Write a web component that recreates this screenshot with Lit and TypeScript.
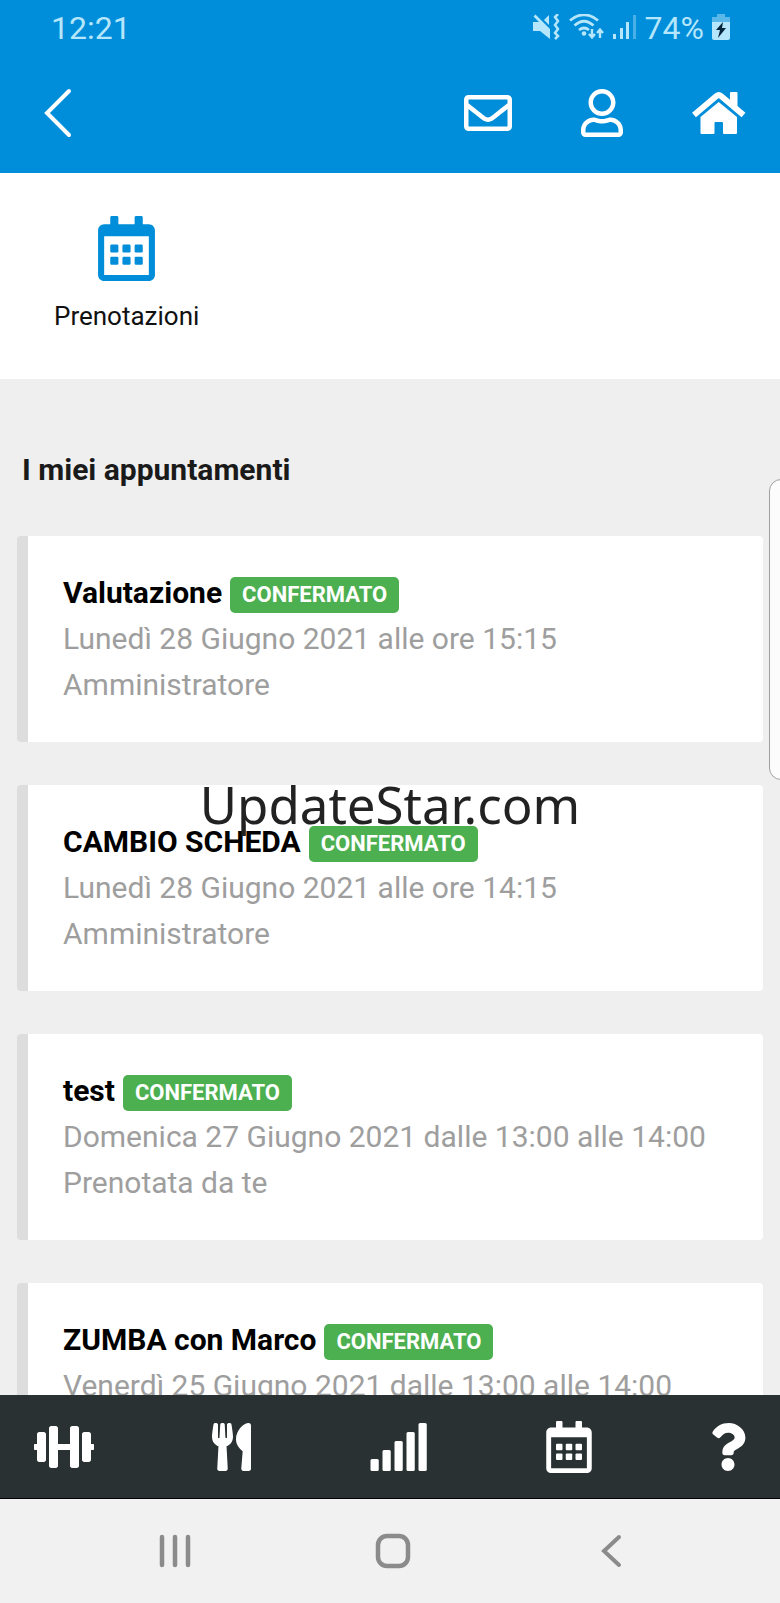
import { LitElement, html, svg, css } from "lit";
import { customElement, property } from "lit/decorators.js";

const calendarShape = svg`
  <path fill-rule="evenodd" d="M96 64V12c0-7 5-12 12-12h40c7 0 12 5 12 12v52h128V12c0-7 5-12 12-12h40c7 0 12 5 12 12v52h48c26 0 48 22 48 48v352c0 26-22 48-48 48H48c-26 0-48-22-48-48V112c0-26 22-48 48-48zM48 160v304h352V160z"/>
  <rect x="96" y="224" width="64" height="64" rx="10"/><rect x="192" y="224" width="64" height="64" rx="10"/><rect x="288" y="224" width="64" height="64" rx="10"/>
  <rect x="96" y="320" width="64" height="64" rx="10"/><rect x="192" y="320" width="64" height="64" rx="10"/><rect x="288" y="320" width="64" height="64" rx="10"/>`;

const icons = {
  back: html`<svg class="icon" width="30" height="50" viewBox="0 0 30 50"><path d="M26 3 4 25 26 47" fill="none" stroke="currentColor" stroke-width="4" stroke-linecap="round" stroke-linejoin="miter"/></svg>`,
  mail: html`<svg class="icon" width="48" height="48" viewBox="0 0 512 512"><path d="M464 64H48C21.49 64 0 85.49 0 112v288c0 26.51 21.49 48 48 48h416c26.51 0 48-21.49 48-48V112c0-26.51-21.49-48-48-48zm0 48v40.805c-22.422 18.259-58.168 46.651-134.587 106.49-16.841 13.247-50.201 45.072-73.413 44.701-23.208.375-56.579-31.459-73.413-44.701C106.18 199.465 70.425 171.067 48 152.805V112h416zM48 400V214.398c22.914 18.251 55.409 43.862 104.938 82.646 21.857 17.205 60.134 55.186 103.062 54.955 42.717.231 80.509-37.199 103.053-54.947 49.528-38.783 82.032-64.401 104.947-82.653V400H48z"/></svg>`,
  user: html`<svg class="icon" width="42" height="48" viewBox="0 0 448 512"><path d="M313.6 304c-28.7 0-42.5 16-89.6 16-47.1 0-60.8-16-89.6-16C60.2 304 0 364.2 0 438.4V464c0 26.5 21.5 48 48 48h352c26.5 0 48-21.5 48-48v-25.6c0-74.2-60.2-134.4-134.4-134.4zM400 464H48v-25.6c0-47.6 38.8-86.4 86.4-86.4 14.6 0 38.3 16 89.6 16 51.7 0 74.9-16 89.6-16 47.6 0 86.4 38.8 86.4 86.4V464zM224 288c79.5 0 144-64.5 144-144S303.5 0 224 0 80 64.5 80 144s64.5 144 144 144zm0-240c52.9 0 96 43.1 96 96s-43.1 96-96 96-96-43.1-96-96 43.1-96 96-96z"/></svg>`,
  home: html`<svg class="icon" width="54" height="48" viewBox="0 0 54 48"><path d="M8.5 28 26.7 13 45 28V44q0 1-1 1H32q-1 0-1-1V34q0-1-1-1H23.500q-1 0-1 1V44q0 1-1 1H9.500q-1 0-1-1z"/><path d="M38 4q0-1 1-1H44.500q1 0 1 1V20L38 13z"/><path d="M2 26 24.500 7Q26.700 5.200 29 7L51.500 26" fill="none" stroke="currentColor" stroke-width="6"/></svg>`,
  calendarLarge: html`<svg class="icon" width="57" height="65" viewBox="0 0 448 512">${calendarShape}</svg>`,
  calendar: html`<svg class="icon" width="46" height="52" viewBox="0 0 448 512">${calendarShape}</svg>`,
  dumbbell: html`<svg class="icon" width="60" height="48" viewBox="0 0 640 512"><path d="M104 96H56c-13.300 0-24 10.700-24 24v104H8c-4.400 0-8 3.600-8 8v48c0 4.400 3.600 8 8 8h24v104c0 13.300 10.700 24 24 24h48c13.300 0 24-10.700 24-24V120c0-13.300-10.700-24-24-24zm528 128h-24V120c0-13.300-10.700-24-24-24h-48c-13.300 0-24 10.700-24 24v272c0 13.300 10.700 24 24 24h48c13.300 0 24-10.700 24-24V288h24c4.400 0 8-3.600 8-8v-48c0-4.400-3.600-8-8-8zM456 32h-48c-13.300 0-24 10.700-24 24v168H256V56c0-13.300-10.700-24-24-24h-48c-13.300 0-24 10.700-24 24v400c0 13.300 10.700 24 24 24h48c13.300 0 24-10.700 24-24V288h128v168c0 13.300 10.700 24 24 24h48c13.300 0 24-10.700 24-24V56c0-13.300-10.700-24-24-24z"/></svg>`,
  utensils: html`<svg class="icon" width="39" height="48" viewBox="0 0 416 512"><path d="M207.900 15.200c.8 4.700 16.100 94.500 16.100 128.800 0 52.300-27.800 89.600-68.900 104.600L168 486.700c.7 13.700-10.200 25.300-24 25.300H80c-13.700 0-24.700-11.500-24-25.300l12.900-238.100C27.700 233.600 0 196.200 0 144 0 109.600 15.300 19.900 16.100 15.200 19.300-5.100 61.400-5.400 64 16.300v141.200c1.300 3.400 15.100 3.200 16 0 1.400-25.300 7.900-139.200 8-141.800 3.300-20.800 44.700-20.800 47.900 0 .2 2.700 6.600 116.500 8 141.800.9 3.200 14.800 3.400 16 0V16.300c2.600-21.600 44.800-21.400 47.900-1.100zm119.200 285.700l-15 185.100c-1.200 14 9.900 26 23.900 26h56c13.300 0 24-10.700 24-24V24c0-13.200-10.700-24-24-24-82.500 0-221.400 178.500-64.900 300.900z"/></svg>`,
  signal: html`<svg class="icon" width="60" height="48" viewBox="0 0 640 512"><rect x="16" y="384" width="88" height="128" rx="16"/><rect x="144" y="288" width="88" height="224" rx="16"/><rect x="272" y="192" width="88" height="320" rx="16"/><rect x="400" y="96" width="88" height="416" rx="16"/><rect x="528" y="0" width="88" height="512" rx="16"/></svg>`,
  question: html`<svg class="icon" width="36" height="48" viewBox="0 0 384 512"><path d="M202.021 0C122.202 0 70.503 32.703 29.914 91.026c-7.363 10.580-5.093 25.086 5.178 32.874l43.138 32.709c10.373 7.865 25.132 6.026 33.253-4.148 25.049-31.381 43.630-49.449 82.757-49.449 30.764 0 68.816 19.799 68.816 49.631 0 22.552-18.617 34.134-48.993 51.164-35.423 19.860-82.299 44.576-82.299 106.405V320c0 13.255 10.745 24 24 24h72.471c13.255 0 24-10.745 24-24v-5.773c0-42.860 125.268-44.645 125.268-160.627C377.504 66.256 286.902 0 202.021 0zM192 373.459c-38.196 0-69.271 31.075-69.271 69.271 0 38.195 31.075 69.270 69.271 69.270s69.271-31.075 69.271-69.271-31.075-69.270-69.271-69.270z"/></svg>`,
  muted: html`<svg class="icon" width="28" height="28" viewBox="0 0 28 28"><path d="M.5 2.500 2.500.5 17 15V25L7 17H0V8H6z"/><path d="M11 6 16 1V11z"/><path d="M25 0l-3 3 3 4-3 4 3 4-3 4 3 3-3 3" fill="none" stroke="currentColor" stroke-width="2.500"/></svg>`,
  wifi: html`<svg class="icon" width="36" height="28" viewBox="0 0 36 28"><path d="M1 6.500Q15-5 29 6.500M5.500 11.500Q15 3 24.500 11.500M10 16Q15 12 20 16" fill="none" stroke="currentColor" stroke-width="2.800"/><circle cx="15" cy="19.500" r="2.300"/><path d="M23 15v8M20 20l3 3.500 3-3.500M31 24v-8M28 19l3-3.500 3 3.500" fill="none" stroke="currentColor" stroke-width="2.400"/></svg>`,
  mobile: html`<svg class="icon" width="24" height="28" viewBox="0 0 24 28"><rect x="0" y="20" width="3" height="5"/><rect x="7" y="14" width="3" height="11"/><rect x="13" y="8" width="3" height="17"/><rect x="20" y="1" width="3" height="24" opacity="0.400"/></svg>`,
  battery: html`<svg class="icon" width="18" height="28" viewBox="0 0 18 28"><path opacity="0.500" d="M5 0h8v3h5v5H0V3h5z"/><path d="M0 8h18v16q0 2-2 2H2q-2 0-2-2z"/><path fill="#06243a" d="M11 8 4 16h4l-2 8 8-10h-4z"/></svg>`,
  recents: html`<svg class="icon" width="36" height="36" viewBox="0 0 36 36"><path d="M5 4V32M18 4V32M31 4V32" stroke="currentColor" stroke-width="4.500" stroke-linecap="round"/></svg>`,
  square: html`<svg class="icon" width="36" height="36" viewBox="0 0 36 36"><rect x="3" y="3" width="30" height="30" rx="9" fill="none" stroke="currentColor" stroke-width="4.500"/></svg>`,
  sysBack: html`<svg class="icon" width="36" height="36" viewBox="0 0 36 36"><path d="M26 4 11 18 26 32" fill="none" stroke="currentColor" stroke-width="4" stroke-linecap="round"/></svg>`,
};

interface Appointment {
  title: string;
  when: string;
  who: string;
}

const appointments: Appointment[] = [
  { title: "Valutazione", when: "Lunedì 28 Giugno 2021 alle ore 15:15", who: "Amministratore" },
  { title: "CAMBIO SCHEDA", when: "Lunedì 28 Giugno 2021 alle ore 14:15", who: "Amministratore" },
  { title: "test", when: "Domenica 27 Giugno 2021 dalle 13:00 alle 14:00", who: "Prenotata da te" },
  { title: "ZUMBA con Marco", when: "Venerdì 25 Giugno 2021 dalle 13:00 alle 14:00", who: "Prenotata da te" },
];

@customElement("appointment-card")
export class AppointmentCard extends LitElement {
  @property({ attribute: false }) item!: Appointment;

  static styles = css`
    :host {
      display: block;
      flex: none;
    }
    .card {
      padding: 34px 35px;
      border-left: 11px solid #dddddd;
      border-radius: 4px;
      background: #fff;
      color: #9e9e9e;
      font-size: 30px;
      line-height: 46px;
    }
    .row {
      display: flex;
      align-items: center;
      gap: 8px;
      height: 46px;
    }
    .title {
      margin: 0;
      color: #000;
      font-size: 30px;
      font-weight: 700;
    }
    .badge {
      padding: 0 12px;
      border-radius: 5px;
      background: #4caf50;
      color: #fff;
      font-size: 22px;
      font-weight: 700;
      line-height: 36px;
      margin-top: 4px;
    }
    .line {
      margin: 0;
    }
  `;

  render() {
    return html`
      <article class="card">
        <div class="row">
          <h3 class="title">${this.item.title}</h3>
          <span class="badge">CONFERMATO</span>
        </div>
        <p class="line">${this.item.when}</p>
        <p class="line">${this.item.who}</p>
      </article>
    `;
  }
}

@customElement("app-root")
export class AppRoot extends LitElement {
  static styles = css`
    :host {
      display: flex;
      flex-direction: column;
      height: 100vh;
      position: relative;
      overflow: hidden;
      background: #efefef;
      font-family: Roboto, "Liberation Sans", sans-serif;
    }
    .icon {
      display: block;
      fill: currentColor;
    }
    button,
    .link {
      display: block;
      margin: 0;
      padding: 0;
      border: 0;
      background: none;
      color: inherit;
      font: inherit;
      text-decoration: none;
      cursor: pointer;
    }
    .header {
      flex: none;
      background: #008dd9;
      color: #fff;
    }
    .status {
      display: flex;
      align-items: center;
      justify-content: space-between;
      height: 56px;
      padding: 0 50px 0 51px;
      color: #b5e6fb;
      font-size: 32px;
    }
    .indicators {
      display: flex;
      align-items: center;
      gap: 8px;
    }
    .toolbar {
      display: flex;
      align-items: center;
      justify-content: space-between;
      height: 113px;
      padding: 0 34px 4px 43px;
    }
    .actions {
      display: flex;
      align-items: center;
      gap: 69px;
    }
    .shortcuts {
      flex: none;
      display: flex;
      padding: 43px 54px 48px;
      background: #fff;
    }
    .shortcut {
      display: flex;
      flex-direction: column;
      align-items: center;
      gap: 20px;
      color: #008dd9;
    }
    .caption {
      color: #111;
      font-size: 26px;
      line-height: 30px;
    }
    .content {
      flex: 1;
      min-height: 0;
      display: flex;
      flex-direction: column;
      gap: 43px;
      padding: 69px 17px 0;
      overflow: hidden;
    }
    .heading {
      margin: 0;
      padding: 0 5px 2px;
      color: #1a1a1a;
      font-size: 30px;
      font-weight: 700;
      line-height: 43px;
    }
    .tabs {
      flex: none;
      display: flex;
      align-items: center;
      justify-content: space-between;
      height: 103px;
      padding: 0 34px;
      border-bottom: 1px solid #000;
      background: #2a3133;
      color: #fff;
    }
    .system {
      flex: none;
      display: grid;
      grid-template-columns: repeat(3, 1fr);
      align-items: center;
      justify-items: center;
      height: 104px;
      padding: 0 60px 0 66px;
      background: #f1f1f1;
      color: #8b8b8b;
    }
    .edge {
      position: absolute;
      top: 479px;
      right: -13px;
      width: 22px;
      height: 299px;
      border: 1px solid #a0a0a0;
      border-radius: 14px;
      background: #fcfcfc;
    }
    .watermark {
      position: absolute;
      top: 769px;
      left: 0;
      right: 0;
      color: #222;
      font-family: "Noto Sans", "Open Sans", sans-serif;
      font-size: 51px;
      line-height: 70px;
      text-align: center;
      pointer-events: none;
    }
  `;

  render() {
    return html`
      <header class="header">
        <div class="status">
          <span>12:21</span>
          <div class="indicators">
            ${icons.muted} ${icons.wifi} ${icons.mobile}
            <span>74%</span>
            ${icons.battery}
          </div>
        </div>
        <div class="toolbar">
          <button aria-label="Indietro">${icons.back}</button>
          <div class="actions">
            <button aria-label="Messaggi">${icons.mail}</button>
            <button aria-label="Profilo">${icons.user}</button>
            <button aria-label="Home">${icons.home}</button>
          </div>
        </div>
      </header>
      <section class="shortcuts">
        <a class="link shortcut" href="#prenotazioni">
          ${icons.calendarLarge}
          <span class="caption">Prenotazioni</span>
        </a>
      </section>
      <main class="content">
        <h2 class="heading">I miei appuntamenti</h2>
        ${appointments.map((item) => html`<appointment-card .item=${item}></appointment-card>`)}
      </main>
      <nav class="tabs">
        <a class="link" href="#allenamento" aria-label="Allenamento">${icons.dumbbell}</a>
        <a class="link" href="#dieta" aria-label="Dieta">${icons.utensils}</a>
        <a class="link" href="#progressi" aria-label="Progressi">${icons.signal}</a>
        <a class="link" href="#calendario" aria-label="Calendario">${icons.calendar}</a>
        <a class="link" href="#aiuto" aria-label="Aiuto">${icons.question}</a>
      </nav>
      <div class="system">
        <button aria-label="Recenti">${icons.recents}</button>
        <button aria-label="Schermata principale">${icons.square}</button>
        <button aria-label="Torna indietro">${icons.sysBack}</button>
      </div>
      <div class="edge"></div>
      <div class="watermark">UpdateStar.com</div>
    `;
  }
}
